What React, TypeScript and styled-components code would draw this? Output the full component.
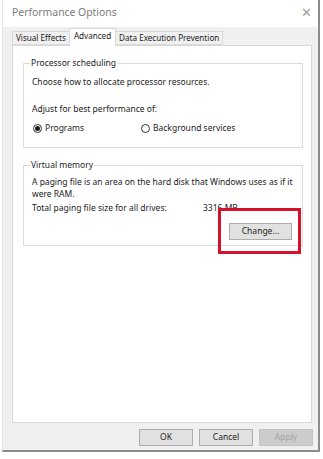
import React from "react";
import styled, { createGlobalStyle } from "styled-components";

const Global = createGlobalStyle`
  html, body { margin: 0; padding: 0; background: #ffffff; }
  body { font-family: "Noto Sans", "Liberation Sans", sans-serif; font-size: 8.5px; color: #1c1c1c; }
  * { box-sizing: border-box; }
`;

const Page = styled.div`
  width: 323px;
  height: 459px;
  background: #ffffff;
  overflow: hidden;
`;

const Frame = styled.div`
  margin-left: 2px;
  width: 318px;
  height: 452px;
  display: flex;
  flex-direction: column;
  border-left: 1px solid #e4e4e4;
  border-right: 2px solid #8c8c8c;
  border-bottom: 2px solid #8c8c8c;
`;

const TitleBar = styled.div`
  height: 27px;
  flex: none;
  background: #ffffff;
  display: flex;
  align-items: center;
  justify-content: space-between;
  padding: 0 6px 3px 9px;
`;

const Title = styled.span`
  color: #7b7b7b;
  font-size: 10.4px;
`;

const Close = styled.span`
  color: #a0a0a0;
  font-size: 13px;
  line-height: 1;
`;

const Body = styled.div`
  flex: 1;
  background: #f0f0f0;
  display: flex;
  flex-direction: column;
  padding: 1px 6px 0 9px;
`;

const TabStrip = styled.div`
  height: 17px;
  display: flex;
  align-items: flex-start;
  padding-left: 1px;
  position: relative;
  z-index: 1;
`;

const Tab = styled.div<{ $active?: boolean }>`
  height: ${(p) => (p.$active ? "18px" : "14px")};
  margin-top: ${(p) => (p.$active ? "0" : "3px")};
  padding: ${(p) => (p.$active ? "1px 4px 0" : "0 3px")};
  display: flex;
  align-items: ${(p) => (p.$active ? "flex-start" : "center")};
  background: ${(p) => (p.$active ? "#ffffff" : "#f0f0f0")};
  border: 1px solid #d9d9d9;
  border-bottom: ${(p) => (p.$active ? "none" : "1px solid #d9d9d9")};
  margin-left: -1px;
  font-size: 8.1px;
  line-height: 12px;
  white-space: nowrap;
`;

const Panel = styled.div`
  height: 378px;
  background: #ffffff;
  border: 1px solid #d9d9d9;
  padding: 11px 8px 0 10px;
  display: flex;
  flex-direction: column;
`;

const Group = styled.fieldset<{ $gap?: number }>`
  margin: ${(p) => p.$gap ?? 0}px 0 0 0;
  padding: 0 4px 0 8px;
  border: 1px solid #dcdcdc;
  min-width: 0;
`;

const Legend = styled.legend`
  margin-left: -2px;
  padding: 0 1px;
  line-height: 12px;
  color: #1c1c1c;
`;

const Line = styled.div<{ $top?: number }>`
  line-height: 12px;
  margin-top: ${(p) => p.$top ?? 0}px;
  white-space: nowrap;
`;

const Para = styled.div<{ $top?: number }>`
  line-height: 12px;
  margin-top: ${(p) => p.$top ?? 0}px;
`;

const RadioRow = styled.div`
  display: grid;
  grid-template-columns: 108px 1fr;
  margin-top: 7px;
  padding-left: 1px;
  line-height: 12px;
`;

const RadioLabel = styled.label`
  display: flex;
  align-items: center;
  gap: 3px;
`;

const RadioDot = styled.span<{ $checked?: boolean }>`
  width: 9px;
  height: 9px;
  border-radius: 50%;
  border: 1px solid #333333;
  background: #ffffff;
  display: inline-flex;
  align-items: center;
  justify-content: center;
  &::after {
    content: "";
    width: 5px;
    height: 5px;
    border-radius: 50%;
    background: ${(p) => (p.$checked ? "#1a1a1a" : "transparent")};
  }
`;

const SizeRow = styled.div`
  display: grid;
  grid-template-columns: 171px 1fr;
  margin-top: 2px;
  line-height: 12px;
`;

const ActionRow = styled.div`
  display: flex;
  justify-content: flex-end;
  margin-top: 9px;
  padding: 0 6px 5px 0;
`;

const Anchor = styled.div`
  position: relative;
`;

const Highlight = styled.div`
  position: absolute;
  top: -15px;
  left: -11px;
  right: -9px;
  bottom: -14px;
  border: 3px solid #d4122c;
  pointer-events: none;
`;

const Button = styled.button<{ $disabled?: boolean; $w?: number }>`
  width: ${(p) => p.$w ?? 54}px;
  height: 17px;
  padding: 0;
  font-family: inherit;
  font-size: 8.5px;
  line-height: 1;
  color: ${(p) => (p.$disabled ? "#a3a3a3" : "#1c1c1c")};
  background: ${(p) => (p.$disabled ? "#cccccc" : "#e1e1e1")};
  border: 1px solid ${(p) => (p.$disabled ? "#c4c4c4" : "#adadad")};
  border-radius: 0;
`;

const Footer = styled.div`
  display: flex;
  justify-content: flex-end;
  gap: 6px;
  margin-top: 6px;
  margin-right: -1px;
`;

export default function App() {
  return (
    <Page>
      <Global />
      <Frame>
        <TitleBar>
          <Title>Performance Options</Title>
          <Close>✕</Close>
        </TitleBar>
        <Body>
          <TabStrip>
            <Tab>Visual Effects</Tab>
            <Tab $active>Advanced</Tab>
            <Tab>Data Execution Prevention</Tab>
          </TabStrip>
          <Panel>
            <Group>
              <Legend>Processor scheduling</Legend>
              <Line $top={7}>Choose how to allocate processor resources.</Line>
              <Line $top={15}>Adjust for best performance of:</Line>
              <RadioRow>
                <RadioLabel>
                  <RadioDot $checked />
                  Programs
                </RadioLabel>
                <RadioLabel>
                  <RadioDot />
                  Background services
                </RadioLabel>
              </RadioRow>
              <Line $top={13} />
            </Group>
            <Group $gap={11}>
              <Legend>Virtual memory</Legend>
              <Para $top={5}>
                A paging file is an area on the hard disk that Windows uses as if it were RAM.
              </Para>
              <SizeRow>
                <span>Total paging file size for all drives:</span>
                <span>3316 MB</span>
              </SizeRow>
              <ActionRow>
                <Anchor>
                  <Button $w={63}>Change...</Button>
                  <Highlight />
                </Anchor>
              </ActionRow>
            </Group>
          </Panel>
          <Footer>
            <Button>OK</Button>
            <Button>Cancel</Button>
            <Button $disabled>Apply</Button>
          </Footer>
        </Body>
      </Frame>
    </Page>
  );
}
